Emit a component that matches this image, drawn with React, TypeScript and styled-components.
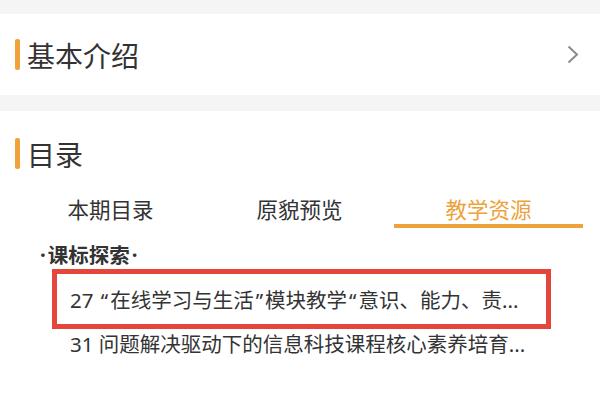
import React from "react";
import styled, { createGlobalStyle } from "styled-components";

const Global = createGlobalStyle`
  html, body {
    margin: 0;
    padding: 0;
    background: #f5f5f5;
  }
  body {
    font-family: "Noto Sans CJK SC", "Noto Sans", sans-serif;
    color: #333;
  }
`;

const Page = styled.div`
  padding-top: 14px;
  min-height: 417px;
  box-sizing: border-box;
`;

const Card = styled.div<{ gap: number }>`
  background: #fff;
  margin-bottom: ${(p) => p.gap}px;
`;

const IntroRow = styled.div`
  height: 81px;
  display: flex;
  align-items: center;
  padding: 0 21px 0 15px;
`;

const Bar = styled.span`
  width: 5px;
  height: 31px;
  border-radius: 2px;
  background: #f0a23a;
  flex: none;
`;

const Title = styled.div`
  margin-left: 7px;
  font-size: 28px;
  line-height: 30px;
  color: #333;
  flex: 1;
`;

const Chevron = () => (
  <svg width="12" height="19" viewBox="0 0 12 19">
    <polyline
      points="1.5,1.5 10,9.5 1.5,17.5"
      fill="none"
      stroke="#8a8a8a"
      strokeWidth="2"
    />
  </svg>
);

const Catalog = styled.div`
  padding: 27px 0 60px;
  min-height: 306px;
  box-sizing: border-box;
`;

const Head = styled.div`
  display: flex;
  align-items: center;
  padding-left: 15px;
`;

const Tabs = styled.div`
  margin: 25px 0 0 16px;
  width: 567px;
  display: grid;
  grid-template-columns: repeat(3, 1fr);
`;

const Tab = styled.div<{ active?: boolean }>`
  text-align: center;
  font-size: 21.5px;
  line-height: 30px;
  color: ${(p) => (p.active ? "#eda23c" : "#333")};
  border-bottom: 4px solid ${(p) => (p.active ? "#f0a23a" : "transparent")};
`;

// latin punctuation (quotes, middle dot) stays proportional
const latinFirst = `"Noto Sans", "Noto Sans CJK SC", sans-serif`;

const Group = styled.div`
  margin: 15px 0 0 40px;
  font-family: ${latinFirst};
  font-size: 20.5px;
  line-height: 24px;
  font-weight: 700;
  color: #333;
`;

const Dot = styled.span`
  margin: 0 1px;
`;

const List = styled.div`
  margin: 11px 0 0 70px;
`;

const Item = styled.div`
  position: relative;
  font-family: ${latinFirst};
  font-size: 20.5px;
  line-height: 44px;
  color: #333;
  white-space: nowrap;
`;

const Quote = styled.span`
  margin: 0 2px;
`;

const Mark = styled.span`
  position: absolute;
  left: -18px;
  top: -9px;
  width: 499px;
  height: 60px;
  box-sizing: border-box;
  border: 5px solid #e4463b;
  pointer-events: none;
`;

const tabs = ["本期目录", "原貌预览", "教学资源"];

const items = [
  { text: "27 “在线学习与生活”模块教学“意识、能力、责...", marked: true },
  { text: "31 问题解决驱动下的信息科技课程核心素养培育...", marked: false },
];

// give curly quotes a little air like the source font
const withQuotes = (s: string) =>
  s.split(/([“”])/).map((part, i) =>
    part === "“" || part === "”" ? <Quote key={i}>{part}</Quote> : part
  );

export default function App() {
  return (
    <Page>
      <Global />
      <Card gap={16}>
        <IntroRow>
          <Bar />
          <Title>基本介绍</Title>
          <Chevron />
        </IntroRow>
      </Card>
      <Card gap={0}>
        <Catalog>
          <Head>
            <Bar />
            <Title>目录</Title>
          </Head>
          <Tabs>
            {tabs.map((t, i) => (
              <Tab key={t} active={i === 2}>
                {t}
              </Tab>
            ))}
          </Tabs>
          <Group>
            ·<Dot />课标探索<Dot />·
          </Group>
          <List>
            {items.map((it) => (
              <Item key={it.text}>
                {withQuotes(it.text)}
                {it.marked && <Mark />}
              </Item>
            ))}
          </List>
        </Catalog>
      </Card>
    </Page>
  );
}
